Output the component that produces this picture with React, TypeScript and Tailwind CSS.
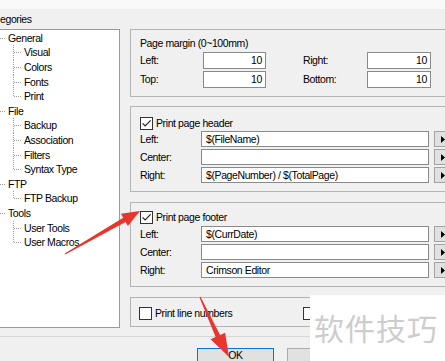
import React from "react";

const Checkbox = ({ checked }: { checked?: boolean }) => (
  <div className="w-[13px] h-[13px] border border-[#333333] bg-white flex items-center justify-center shrink-0">
    {checked && (
      <svg width="11" height="11" viewBox="0 0 11 11">
        <path d="M1.6 5.4 L4.2 8 L9.6 2.4" fill="none" stroke="#222" strokeWidth="1.2" />
      </svg>
    )}
  </div>
);

const ArrowBtn = () => (
  <div className="w-[17px] h-[16px] bg-[#e1e1e1] border border-[#a3a3a3] flex items-center pl-[6px] shrink-0">
    <svg width="4" height="7" viewBox="0 0 4 7">
      <path d="M0 0L4 3.5L0 7Z" fill="#000" />
    </svg>
  </div>
);

const WideField = ({ value }: { value?: string }) => (
  <div className="w-[228px] h-[16px] bg-white border border-[#8a8a8a] flex items-center pl-[4px] overflow-hidden whitespace-nowrap">
    {value}
  </div>
);

const NumField = ({ value, wide }: { value: string; wide?: boolean }) => (
  <div
    className={
      wide
        ? "w-[64px] h-[17px] bg-white border border-[#8a8a8a] flex items-center justify-end pr-[3px]"
        : "w-[63px] h-[17px] bg-white border border-[#8a8a8a] flex items-center justify-end pr-[3px]"
    }
  >
    {value}
  </div>
);

const TextRow = ({ label, value }: { label: string; value?: string }) => (
  <div className="flex items-center h-[16px]">
    <span className="w-[61px] shrink-0">{label}</span>
    <WideField value={value} />
    <div className="ml-[5px]">
      <ArrowBtn />
    </div>
  </div>
);

const treeItems: [string, number, boolean?][] = [
  ["General", 0],
  ["Visual", 1],
  ["Colors", 1],
  ["Fonts", 1],
  ["Print", 1, true],
  ["File", 0],
  ["Backup", 1],
  ["Association", 1],
  ["Filters", 1],
  ["Syntax Type", 1, true],
  ["FTP", 0],
  ["FTP Backup", 1, true],
  ["Tools", 0],
  ["User Tools", 1],
  ["User Macros", 1, true],
];

const TreeRow = ({ label, level, last }: { label: string; level: number; last?: boolean }) => (
  <div className="flex items-center h-[14.6px] whitespace-nowrap">
    {level === 0 ? (
      <svg width="8" height="15" className="shrink-0">
        <line x1="0" y1="7.5" x2="6" y2="7.5" stroke="#a0a0a0" strokeDasharray="1 1" shapeRendering="crispEdges" />
      </svg>
    ) : (
      <svg width="24" height="15" className="shrink-0">
        <line x1="13.5" y1="0" x2="13.5" y2={last ? 7.5 : 15} stroke="#a0a0a0" strokeDasharray="1 1" shapeRendering="crispEdges" />
        <line x1="14" y1="7.5" x2="22" y2="7.5" stroke="#a0a0a0" strokeDasharray="1 1" shapeRendering="crispEdges" />
      </svg>
    )}
    <span>{label}</span>
  </div>
);

export default function App() {
  return (
    <div className="w-[445px] h-[361px] bg-[#f0f0f0] relative overflow-hidden text-black text-[10.5px] tracking-[-0.4px] leading-[13px] font-['Liberation_Sans',Arial,sans-serif]">
      <div className="h-[9px] bg-[#f9f9f9]" />
      <div className="h-[20px] flex items-center">egories</div>

      <div className="flex h-[299px]">
        {/* tree */}
        <div className="w-[120px] h-[299px] bg-white border-t border-r border-b border-[#9a9a9a] pt-px shrink-0">
          {treeItems.map(([l, lv, last]) => (
            <TreeRow key={l} label={l} level={lv} last={last} />
          ))}
        </div>

        {/* right column */}
        <div className="ml-[10px] w-[330px] shrink-0 flex flex-col">
          {/* margins */}
          <div className="h-[68px] border border-[#b4b4b4] pl-[9px] pt-[7px]">
            <div className="h-[13px]">Page margin (0~100mm)</div>
            <div className="mt-[2px] flex flex-col gap-[2px]">
              <div className="flex items-center">
                <span className="w-[63px] shrink-0">Left:</span>
                <NumField value="10" />
                <span className="w-[64px] ml-[37px] shrink-0">Right:</span>
                <NumField value="10" wide />
              </div>
              <div className="flex items-center">
                <span className="w-[63px] shrink-0">Top:</span>
                <NumField value="10" />
                <span className="w-[64px] ml-[37px] shrink-0">Bottom:</span>
                <NumField value="10" wide />
              </div>
            </div>
          </div>

          {/* header */}
          <div className="mt-[9px] h-[86px] border border-[#b4b4b4] pl-[9px] pt-[10px]">
            <div className="flex items-center h-[13px] gap-[3px]">
              <Checkbox checked />
              <span>Print page header</span>
            </div>
            <div className="mt-[1px] flex flex-col gap-[2px]">
              <TextRow label="Left:" value="$(FileName)" />
              <TextRow label="Center:" />
              <TextRow label="Right:" value="$(PageNumber) / $(TotalPage)" />
            </div>
          </div>

          {/* footer */}
          <div className="mt-[10px] h-[85px] border border-[#b4b4b4] pl-[9px] pt-[8px]">
            <div className="flex items-center h-[13px] gap-[3px]">
              <Checkbox checked />
              <span>Print page footer</span>
            </div>
            <div className="mt-[2px] flex flex-col gap-[2px]">
              <TextRow label="Left:" value="$(CurrDate)" />
              <TextRow label="Center:" />
              <TextRow label="Right:" value="Crimson Editor" />
            </div>
          </div>

          {/* line numbers */}
          <div className="mt-[10px] h-[30px] border border-[#b4b4b4] pl-[8px] pt-[9px] flex">
            <div className="w-[164px] flex items-center h-[12px] gap-[3px] shrink-0">
              <Checkbox />
              <span>Print line numbers</span>
            </div>
            <div className="flex items-center h-[12px]">
              <Checkbox />
            </div>
          </div>
        </div>
      </div>

      <div className="mt-[8px] h-px bg-[#d7d7d7]" />

      <div className="mt-[11px] pl-[197px] flex gap-[13px]">
        <div className="w-[77px] h-[23px] bg-[#e1e1e1] border border-[#0078d7] flex justify-center pt-[1px] leading-[11px]">OK</div>
        <div className="w-[77px] h-[23px] bg-[#e1e1e1] border border-[#adadad]" />
      </div>

      {/* watermark */}
      <div className="absolute left-[310px] top-[295px] w-[135px] h-[66px] bg-white">
        <div className="ml-[4px] mt-[15px] text-[30px] leading-[34px] tracking-[1px] text-[#cdcdcd] font-['Noto_Sans_CJK_SC',sans-serif]">
          软件技巧
        </div>
      </div>

      {/* red arrows */}
      <svg className="absolute left-0 top-0 pointer-events-none" width="445" height="361">
        <polygon
          points="64.7,253.5 123.2,217.7 120.9,213.8 140,211 127.9,226 125.6,222.1 65.3,254.5"
          fill="#e8362c"
        />
        <polygon
          points="199.4,297.2 215.6,337 210.6,339.3 229,357 225.1,332.7 220.1,335 200.5,296.8"
          fill="#e8362c"
        />
      </svg>
    </div>
  );
}
